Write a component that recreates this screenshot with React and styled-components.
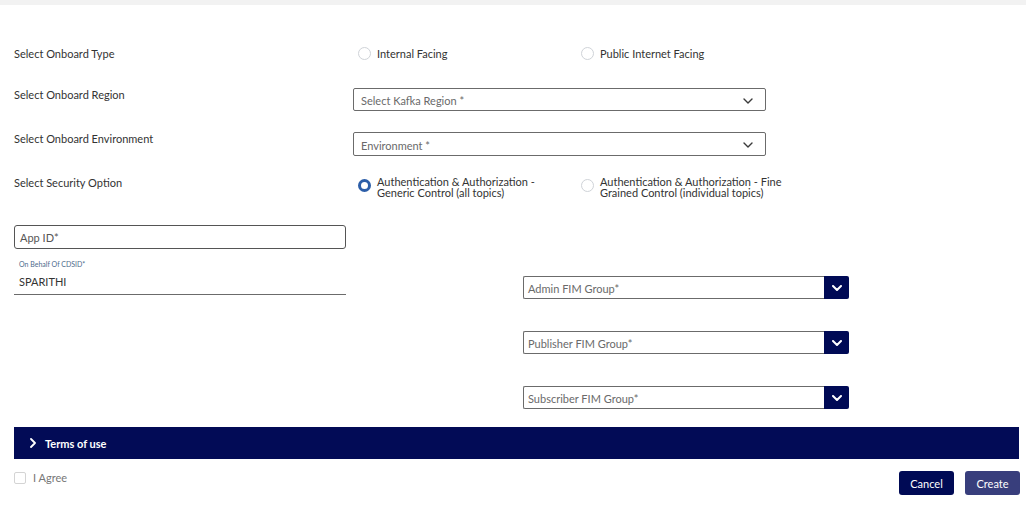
import React from 'react';
import styled, { createGlobalStyle } from 'styled-components';

const GlobalStyle = createGlobalStyle`
  body {
    margin: 0;
    background: #fff;
    font-family: Lato, "Open Sans", sans-serif;
    color: #3a3a3a;
  }
`;

const TopBar = styled.div`
  height: 5px;
  background: #f2f2f2;
`;

const Form = styled.div`
  padding: 0 7px 0 14px;
`;

const Row = styled.div`
  display: grid;
  grid-template-columns: 339px 1fr;
  align-items: ${p => (p.center ? 'center' : 'start')};
  margin-top: ${p => p.top}px;
  min-height: ${p => p.h}px;
`;

const Label = styled.div`
  font-size: 11px;
  line-height: 13px;
  color: #333;
`;

const Options = styled.div`
  display: grid;
  grid-template-columns: 223px 220px;
  align-items: start;
`;

const RadioItem = styled.label`
  display: flex;
  align-items: ${p => (p.multi ? 'flex-start' : 'center')};
  gap: 6px;
  padding-left: 5px;
  font-size: 11px;
  line-height: 11px;
  color: #333;
`;

const RadioDot = styled.span`
  flex: none;
  box-sizing: border-box;
  width: 13px;
  height: 13px;
  border-radius: 50%;
  border: ${p => (p.checked ? '3px solid #2c5ea8' : '1px solid #cfd3d8')};
  margin-top: ${p => (p.multi ? 3 : 0)}px;
`;

const SelectBox = styled.div`
  box-sizing: border-box;
  width: 413px;
  height: ${p => p.h}px;
  border: 1px solid #6b6b6b;
  border-radius: 2px;
  display: flex;
  align-items: center;
  justify-content: space-between;
  padding: 2px 12px 0 7px;
  font-size: 11px;
  color: #6a6a6a;
`;

const Chevron = ({ color = '#3b3b3b', w = 10, stroke = 1.4 }) => (
  <svg width={w} height={w * 0.6} viewBox="0 0 10 6">
    <path d="M1 1l4 4 4-4" fill="none" stroke={color} strokeWidth={stroke} strokeLinecap="round" strokeLinejoin="round" />
  </svg>
);

const Lower = styled.div`
  display: flex;
  margin-top: 27px;
`;

const LeftCol = styled.div`
  width: 332px;
`;

const TextInput = styled.div`
  box-sizing: border-box;
  height: 24px;
  border: 1px solid #555;
  border-radius: 3px;
  padding: 0 5px;
  display: flex;
  align-items: center;
  font-size: 11px;
  color: #555;
`;

const Caption = styled.div`
  margin-top: 11px;
  padding-left: 5px;
  font-size: 7px;
  line-height: 8px;
  color: #4e6b8c;
`;

const UnderlineField = styled.div`
  margin-top: 7px;
  padding: 0 5px 6px;
  border-bottom: 1px solid #6b6b6b;
  font-size: 11px;
  line-height: 13px;
  color: #333;
`;

const RightCol = styled.div`
  margin-left: 177px;
  padding-top: 51px;
  display: flex;
  flex-direction: column;
  gap: 32px;
`;

const GroupSelect = styled.div`
  display: flex;
  width: 326px;
  height: 23px;
`;

const GroupField = styled.div`
  box-sizing: border-box;
  flex: 1;
  border: 1px solid #6b6b6b;
  border-right: none;
  border-radius: 2px 0 0 2px;
  display: flex;
  align-items: center;
  padding: 1px 4px 0;
  font-size: 11px;
  color: #6a6a6a;
`;

const GroupButton = styled.div`
  width: 25px;
  background: #000a55;
  border-radius: 0 2px 2px 0;
  display: flex;
  align-items: center;
  justify-content: center;
`;

const TermsBar = styled.div`
  margin-top: 18px;
  height: 32px;
  background: #020b56;
  display: flex;
  align-items: center;
  gap: 9px;
  padding-left: 16px;
  color: #fff;
  font-size: 11px;
  font-weight: 700;
`;

const Footer = styled.div`
  display: flex;
  justify-content: space-between;
  align-items: flex-start;
  margin-top: 12px;
  margin-right: -1px;
`;

const Agree = styled.label`
  display: flex;
  align-items: center;
  gap: 7px;
  font-size: 11px;
  color: #777;
`;

const Box = styled.span`
  box-sizing: border-box;
  width: 12px;
  height: 12px;
  border: 1px solid #d4d4d4;
  border-radius: 2px;
`;

const Buttons = styled.div`
  display: flex;
  gap: 11px;
`;

const Button = styled.button`
  width: 55px;
  height: 24px;
  border: none;
  border-radius: 3px;
  background: ${p => (p.primary ? '#383e7c' : '#000a55')};
  color: #fff;
  font-family: inherit;
  font-size: 11px;
  padding: 0;
`;

const Radio = ({ checked, children }) => {
  const multi = Array.isArray(children);
  return (
    <RadioItem multi={multi}>
      <RadioDot checked={checked} multi={multi} />
      <span>{children}</span>
    </RadioItem>
  );
};

export default function App() {
  return (
    <>
      <GlobalStyle />
      <TopBar />
      <Form>
        <Row top={41} h={14} center>
          <Label>Select Onboard Type</Label>
          <Options>
            <Radio>Internal Facing</Radio>
            <Radio>Public Internet Facing</Radio>
          </Options>
        </Row>
        <Row top={28}>
          <Label>Select Onboard Region</Label>
          <SelectBox h={23}>
            Select Kafka Region *
            <Chevron />
          </SelectBox>
        </Row>
        <Row top={21}>
          <Label>Select Onboard Environment</Label>
          <SelectBox h={24}>
            Environment *
            <Chevron />
          </SelectBox>
        </Row>
        <Row top={20}>
          <Label>Select Security Option</Label>
          <Options>
            <Radio checked>Authentication &amp; Authorization -<br />Generic Control (all topics)</Radio>
            <Radio>Authentication &amp; Authorization - Fine<br />Grained Control (individual topics)</Radio>
          </Options>
        </Row>
        <Lower>
          <LeftCol>
            <TextInput>App ID*</TextInput>
            <Caption>On Behalf Of CDSID*</Caption>
            <UnderlineField>SPARITHI</UnderlineField>
          </LeftCol>
          <RightCol>
            {['Admin FIM Group*', 'Publisher FIM Group*', 'Subscriber FIM Group*'].map(t => (
              <GroupSelect key={t}>
                <GroupField>{t}</GroupField>
                <GroupButton>
                  <Chevron color="#fff" w={10} stroke={2} />
                </GroupButton>
              </GroupSelect>
            ))}
          </RightCol>
        </Lower>
        <TermsBar>
          <svg width="6" height="10" viewBox="0 0 6 10">
            <path d="M1 1l4 4-4 4" fill="none" stroke="#fff" strokeWidth="1.8" strokeLinecap="round" strokeLinejoin="round" />
          </svg>
          Terms of use
        </TermsBar>
        <Footer>
          <Agree>
            <Box />
            I Agree
          </Agree>
          <Buttons>
            <Button>Cancel</Button>
            <Button primary>Create</Button>
          </Buttons>
        </Footer>
      </Form>
    </>
  );
}
